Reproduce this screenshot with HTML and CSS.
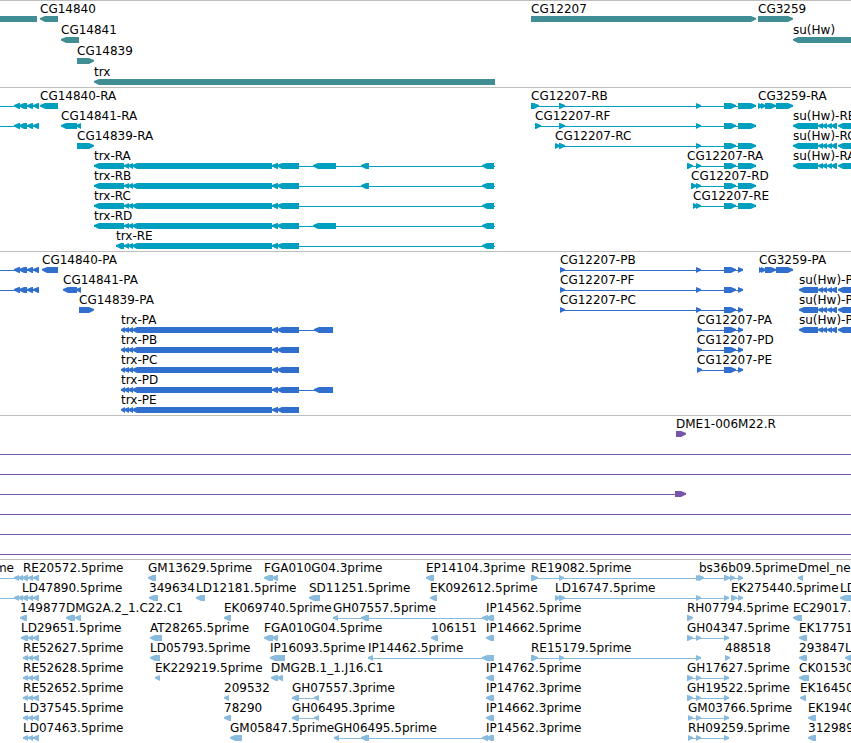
FILE: index.html
```html
<!DOCTYPE html>
<html lang="en">
<head>
<meta charset="utf-8">
<title>Genome browser tracks</title>
<link rel="stylesheet" href="styles.css">
</head>
<body>
<main class="browser">
  <section class="track track-gene" data-track="gene"></section>
  <section class="track track-mrna" data-track="mrna"></section>
  <section class="track track-cds" data-track="cds"></section>
  <section class="track track-bac" data-track="bac"></section>
  <section class="track track-est" data-track="est"></section>
</main>
<script src="tracks.js"></script>
</body>
</html>
```
FILE: styles.css
```css
body {
  margin: 0;
  background: #fff;
  color: #000;
  font: 12px/12px "DejaVu Sans", sans-serif;
}

.browser {
  overflow: hidden;
  border-bottom: 1px solid #bebebe;
}

.track {
  padding: 2px 0 1px;
  border-top: 1px solid #bebebe;
}

.row {
  position: relative;
  height: 20px;
  padding-top: 13px;
  box-sizing: border-box;
}

.label {
  position: absolute;
  top: 0;
  white-space: nowrap;
}

.glyphs {
  display: block;
  width: 100%;
  height: 6px;
  overflow: visible;
  fill: currentColor;
}

.track-gene { padding-bottom: 0; }
.track-gene .row { height: 21px; }
.track-gene .glyphs { color: #408e94; }
.track-mrna .glyphs { color: #009fc0; }
.track-cds .glyphs { color: #306fcd; }
.track-bac .glyphs { color: #7755aa; }
.track-est .glyphs { color: #88bbdd; }
```
FILE: tracks.js
```js
// Each feature is [label, label position, shapes].
// Shapes: "<a-b" reverse exon, ">a-b" forward exon, "=a-b" block, "-a-b" intron line.
const upstream = "-0-39 <14-20 <19-27 <27-33 <33-39";
const suHw = " <818-823 <822-827 <827-832 <831-837 <838-862";
const trxCore = " <124-129 <128-133 <132-272 <272-278 <277-299";
const trxEnd = " <482-494 -94-495";
const rTail = " >696-701 >724-736 >738-756";
const pTail = " >724-736 >738-743";
const estUp = "-0-39 <14-19 <18-23 <22-28 <28-33 <33-39";
const est3 = "-23-39 <23-28 <28-33 <33-39";
const ghRun = "-687-729 >687-693 >696-701 >724-729";
const gmRun = "-688-729 >688-693 >696-701 >724-729";
const ghPair = "-292-319 <292-299 <314-319";

const tracks = {
  gene: [
    [["", 0, "=0-37"], ["CG14840", 40, "<40-58"], ["CG12207", 531, ">531-756"], ["CG3259", 758, ">758-793"]],
    [["CG14841", 61, "<61-79"], ["su(Hw)", 793, "<793-862"]],
    [["CG14839", 77, ">77-94"]],
    [["trx", 94, "<94-495"]]
  ],
  mrna: [
    [["", 0, upstream], ["CG14840-RA", 40, "<40-58"], ["CG12207-RB", 531, "-531-756 >531-539 >559-565" + rTail],
     ["CG3259-RA", 758, "-758-793 >758-763 >761-766 >765-776 >776-793"]],
    [["", 0, upstream], ["CG14841-RA", 61, "<61-77 <76-81"], ["CG12207-RF", 535, "-535-756 >535-541 >559-565" + rTail],
     ["su(Hw)-RE", 793, "<793-818" + suHw]],
    [["CG14839-RA", 77, ">77-94"], ["CG12207-RC", 555, "-555-756 >555-560 >559-565" + rTail], ["su(Hw)-RC", 793, "<793-818" + suHw]],
    [["trx-RA", 94, "<94-124" + trxCore + " <313-336 <361-369" + trxEnd], ["CG12207-RA", 687, "-687-756 >687-693" + rTail],
     ["su(Hw)-RA", 793, "<793-818" + suHw]],
    [["trx-RB", 94, "<94-124" + trxCore + " <361-369" + trxEnd], ["CG12207-RD", 691, "-691-756 >691-697" + rTail]],
    [["trx-RC", 94, "<94-124" + trxCore + trxEnd], ["CG12207-RE", 693, "-693-756 >693-698" + rTail]],
    [["trx-RD", 94, "<94-124" + trxCore + " <313-336" + trxEnd]],
    [["trx-RE", 116, "<116-124" + trxCore + " <482-494 -116-495"]]
  ],
  cds: [
    [["", 0, upstream], ["CG14840-PA", 42, "<42-58"], ["CG12207-PB", 560, "-560-743 >560-565 >696-701" + pTail],
     ["CG3259-PA", 759, "-759-793 >759-763 >761-766 >765-776 >776-793"]],
    [["", 0, upstream], ["CG14841-PA", 63, "<63-77 <76-81"], ["CG12207-PF", 560, "-560-743 >560-565 >696-701" + pTail],
     ["su(Hw)-PE", 799, "<799-818" + suHw]],
    [["CG14839-PA", 79, ">79-94"], ["CG12207-PC", 560, "-560-743 >560-565 >696-701" + pTail], ["su(Hw)-PC", 799, "<799-818" + suHw]],
    [["trx-PA", 121, "-121-333 <121-125" + trxCore + " <314-333"], ["CG12207-PA", 697, "-697-743 >697-702" + pTail],
     ["su(Hw)-PA", 799, "<799-818" + suHw]],
    [["trx-PB", 121, "<121-125" + trxCore], ["CG12207-PD", 697, "-697-743 >697-702" + pTail]],
    [["trx-PC", 121, "<121-125" + trxCore], ["CG12207-PE", 697, "-697-743 >697-702" + pTail]],
    [["trx-PD", 121, "-121-333 <121-125" + trxCore + " <314-333"]],
    [["trx-PE", 121, "<121-125" + trxCore]]
  ],
  bac: [
    [["DME1-006M22.R", 676, ">676-686"]],
    [["", 0, "-0-9999"]],
    [["", 0, "-0-9999"]],
    [["", 0, "-0-686 >675-686"]],
    [["", 0, "-0-9999"]],
    [["", 0, "-0-9999"]],
    [["", 0, "-0-9999"]]
  ],
  est: [
    [["prime", -21, ""], ["RE20572.5prime", 23, estUp], ["GM13629.5prime", 148, "<148-156"], ["FGA010G04.3prime", 264, "<264-273 <272-278"],
     ["EP14104.3prime", 426, "<426-434"], ["RE19082.5prime", 531, "-531-701 >531-538 >559-564 >696-701"],
     ["bs36b09.5prime", 699, "-698-743 >698-704 >724-730 >730-735 >738-743"], ["Dmel_neb", 798, "<798-803"]],
    [["LD47890.5prime", 22, estUp], ["349634", 149, "<149-158"], ["LD12181.5prime", 196, "<196-205"], ["SD11251.5prime", 309, "<309-320"],
     ["EK092612.5prime", 430, "<430-437"], ["LD16747.5prime", 555, "-555-729 >555-560 >559-565 >696-701 >724-729"],
     ["EK275440.5prime", 731, "-731-743 >731-737 >738-743"], ["LD", 840, "<840-862"]],
    [["149877", 20, "<20-27"], ["DMG2A.2_1.C22.C1", 66, "<66-75 <75-81"], ["EK069740.5prime", 224, "<224-231"],
     ["GH07557.5prime", 333, "-333-494 <333-338 <361-369 <482-488"], ["IP14562.5prime", 486, "<486-494"],
     ["RH07794.5prime", 687, ">687-693"], ["EC29017.5prime", 793, "<793-802"]],
    [["LD29651.5prime", 21, "-21-39 <21-28 <28-33 <33-39"], ["AT28265.5prime", 150, "<150-162"], ["FGA010G04.5prime", 264, "<264-273 <272-278"],
     ["106151", 431, "<431-438"], ["IP14662.5prime", 486, "<486-494"], ["GH04347.5prime", 687, ghRun], ["EK17751", 799, "<799-807"]],
    [["RE52627.5prime", 23, est3], ["LD05793.5prime", 150, "<150-160"], ["IP16093.5prime", 270, "<270-285"],
     ["IP14462.5prime", 368, "-368-494 <368-373 <482-494"], ["RE15179.5prime", 531, "-531-701 >531-538 >559-564 >696-701"],
     ["488518", 725, ">725-730"], ["293847", 799, "<799-807"], ["L", 845, "<845-862"]],
    [["RE52628.5prime", 23, est3], ["EK229219.5prime", 155, "<155-160"], ["DMG2B.1_1.J16.C1", 271, "<271-278 <277-283"],
     ["IP14762.5prime", 486, "<486-494"], ["GH17627.5prime", 687, ghRun], ["CK01530", 799, "<799-809"]],
    [["RE52652.5prime", 23, est3], ["209532", 224, "<224-229"], ["GH07557.3prime", 292, ghPair],
     ["IP14762.3prime", 486, "<486-494"], ["GH19522.5prime", 687, ghRun], ["EK16450", 800, "<800-806"]],
    [["LD37545.5prime", 23, est3], ["78290", 224, "<224-231"], ["GH06495.3prime", 292, ghPair],
     ["IP14662.3prime", 486, "<486-494"], ["GM03766.5prime", 688, gmRun], ["EK1940", 808, "<808-816"]],
    [["LD07463.5prime", 23, est3], ["GM05847.5prime", 230, "<230-242"], ["GH06495.5prime", 334, "-334-494 <334-339 <361-369 <482-488"],
     ["IP14562.3prime", 486, "<486-494"], ["RH09259.5prime", 688, gmRun], ["312989", 808, "<808-816"]]
  ]
};

// Outline of one shape in a band 6 units high.
function outline(kind, a, b) {
  const tip = Math.min(5, b - a);
  if (kind === "-") return `M${a} 3H${b}V4H${a}Z`;
  if (kind === "=") return `M${a} 0H${b}V6H${a}Z`;
  if (kind === "<") return `M${a} 2L${a + tip} 0H${b}V6H${a + tip}L${a} 3.5Z`;
  return `M${b} 2L${b - tip} 0H${a}V6H${b - tip}L${b} 3.5Z`;
}

const svgNS = "http://www.w3.org/2000/svg";

for (const section of document.querySelectorAll(".track")) {
  for (const features of tracks[section.dataset.track]) {
    const row = document.createElement("div");
    row.className = "row";
    const svg = document.createElementNS(svgNS, "svg");
    svg.setAttribute("class", "glyphs");
    for (const [name, x, shapes] of features) {
      if (name) {
        const label = document.createElement("span");
        label.className = "label";
        label.style.left = `${x}px`;
        label.textContent = name;
        row.append(label);
      }
      for (const [, kind, a, b] of shapes.matchAll(/([<>=-])(\d+)-(\d+)/g)) {
        const path = document.createElementNS(svgNS, "path");
        path.setAttribute("d", outline(kind, Number(a), Number(b)));
        svg.append(path);
      }
    }
    row.append(svg);
    section.append(row);
  }
}
```
